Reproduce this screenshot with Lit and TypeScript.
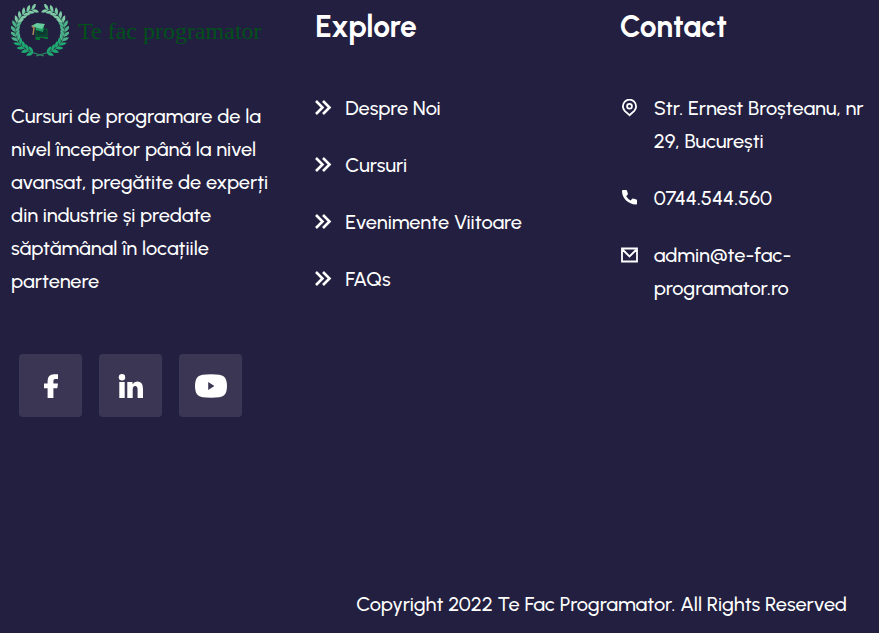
import { LitElement, html, svg, css } from "lit";
import { customElement } from "lit/decorators.js";

const links = ["Despre Noi", "Cursuri", "Evenimente Viitoare", "FAQs"];

const chevrons = html`<svg class="icon" viewBox="0 0 18 18" aria-hidden="true">
  <path d="M1 2 7.500 8.500 1 15M8 2 14.500 8.500 8 15" fill="none" stroke="currentColor" stroke-width="2.6" />
</svg>`;

const pin = html`<svg class="icon" viewBox="0 0 18 18" aria-hidden="true">
  <g fill="none" stroke="currentColor" stroke-width="1.8">
    <path d="M9.500 16.200 4.700 11.800A6.600 6.600 0 1 1 14.300 11.800Z" />
    <circle cx="9.500" cy="7.300" r="2.400" />
  </g>
</svg>`;

const phone = html`<svg class="icon" viewBox="0 0 18 18" aria-hidden="true">
  <path d="M3 1h3.200q.5 0 .7.5l1 3.200q.1.5-.2.9L6.200 7.200a11 11 0 0 0 4.400 4.200l1.600-1.600q.4-.3.9-.2l3.300 1q.6.2.6.8v3.300q0 .7-.8.7C8.600 15.600 2 9.400 2 2q0-1 1-1Z" fill="currentColor" />
</svg>`;

const mail = html`<svg class="icon" viewBox="0 0 18 18" aria-hidden="true">
  <path d="M2 2.500H17V15.500H2ZM3 4 9.500 10.500 16 4" fill="none" stroke="currentColor" stroke-width="1.800" />
</svg>`;

const facebook = html`<svg class="social-icon" viewBox="0 0 32 32" aria-hidden="true">
  <path d="M12.600 28V18.300H9V13.600H12.600V11Q12.600 4.200 19 4.200H23V9H20.200Q18.400 9 18.400 10.800V13.600H23L22.300 18.300H18.400V28Z" fill="currentColor" />
</svg>`;

const linkedin = html`<svg class="social-icon" viewBox="0 0 32 32" aria-hidden="true">
  <g fill="currentColor">
    <circle cx="7" cy="7.200" r="3.200" />
    <path d="M4.300 12H9.700V28H4.300ZM12.300 12H17.500V14.200Q19 11.600 22.300 11.600 28 11.600 28 18.600V28H22.600V19.800Q22.600 16.100 20.200 16.100 17.700 16.100 17.700 19.800V28H12.300Z" />
  </g>
</svg>`;

const youtube = html`<svg class="social-icon" viewBox="0 0 32 32" aria-hidden="true">
  <path fill="currentColor" fill-rule="evenodd" d="M16 4.200Q26 4.200 28.800 6.400 32 9 32 16T28.800 25.600Q26 27.800 16 27.800T3.200 25.600Q0 23 0 16T3.200 6.400Q6 4.200 16 4.200ZM13.200 12V20L19.400 16Z" />
</svg>`;

const leafPairs = Array.from({ length: 13 }, (_, i) => i);

function branch(side: number) {
  return svg`<g transform=${`translate(29 27) scale(${side} 1)`}>
    <path d="M-7-22A23.500 22.500 0 0 0-6 22L4 25" fill="none" stroke="#2f8a62" stroke-width="1.2" />
    ${leafPairs.map((i) => {
      const degrees = 200 + (i * 144) / 12;
      const angle = (degrees * Math.PI) / 180;
      const x = 24.5 * Math.sin(angle);
      const y = 22.5 * Math.cos(angle);
      const fill = i < 5 ? "#7fc9a5" : i < 9 ? "#4db28a" : "#1fa972";
      return svg`<g fill=${fill} transform=${`translate(${x.toFixed(2)} ${y.toFixed(2)}) rotate(${(180 - degrees).toFixed(2)})`}>
        <path d="M0 0Q1-4.500 6-4.800 5.500 0 0 0Z" />
        <path d="M0 0Q1 4.500 6 4.800 5.500 0 0 0Z" />
      </g>`;
    })}
  </g>`;
}

const emblem = html`<svg class="emblem" viewBox="0 0 58 54" aria-hidden="true">
  ${branch(1)}${branch(-1)}
  <path d="M25 25H36V32H25Z" fill="#0b3a35" stroke="#08602f" />
  <path d="M24 33H37V35H33V34H29V36H25Z" fill="#087438" />
  <path d="M24 22 33 22 32 28 25 26Z" fill="#249c62" />
  <path d="M20 22 26 19 34 20 31 25Z" fill="#67cc9b" />
  <path d="M21 22 23 24 22 31" fill="none" stroke="#a78b59" stroke-width="1.500" />
</svg>`;

@customElement("app-root")
export class AppRoot extends LitElement {
  static styles = css`
    :host {
      display: block;
      min-height: 100vh;
      background: #231f40;
      color: #fff;
      font: 500 20px/33px Urbanist, Lato, sans-serif;
    }
    footer {
      display: flex;
      flex-direction: column;
      justify-content: space-between;
      min-height: 100vh;
    }
    .columns {
      display: grid;
      grid-template-columns: repeat(3, minmax(0, 1fr));
      gap: 45px;
      padding-left: 11px;
    }
    a {
      color: inherit;
      text-decoration: none;
    }
    .brand {
      display: flex;
      align-items: center;
      gap: 9px;
      height: 62px;
      color: #00501a;
      font-family: "Liberation Serif", serif;
      font-size: 24px;
      font-weight: 400;
      white-space: nowrap;
    }
    .emblem {
      flex: none;
      width: 58px;
      height: 54px;
    }
    .about {
      margin: 38px 0 0;
    }
    .social {
      display: flex;
      gap: 17px;
      margin: 56px 0 0 8px;
    }
    .social-link {
      display: grid;
      place-items: center;
      width: 63px;
      height: 63px;
      border-radius: 4px;
      background: #3a3653;
    }
    .social-icon {
      width: 32px;
      height: 32px;
    }
    h2 {
      margin: 8px 0 46px;
      font-size: 30px;
      line-height: 38px;
      font-weight: 700;
    }
    ul {
      display: grid;
      gap: 24px;
      margin: 0;
      padding: 0;
      list-style: none;
    }
    .entry {
      display: flex;
      gap: 12px;
    }
    .contact .entry {
      gap: 16px;
    }
    .icon {
      flex: none;
      width: 18px;
      height: 18px;
      margin-top: 7px;
    }
    .copyright {
      margin: 0;
      padding: 0 32px 12px;
      text-align: right;
    }
  `;

  render() {
    return html`<footer>
      <div class="columns">
        <section>
          <a class="brand" href="#">${emblem}<span>Te fac programator</span></a>
          <p class="about">
            Cursuri de programare de la nivel începător până la nivel avansat,
            pregătite de experți din industrie și predate săptămânal în locațiile
            partenere
          </p>
          <div class="social">
            <a class="social-link" href="#" aria-label="Facebook">${facebook}</a>
            <a class="social-link" href="#" aria-label="LinkedIn">${linkedin}</a>
            <a class="social-link" href="#" aria-label="YouTube">${youtube}</a>
          </div>
        </section>
        <nav aria-labelledby="explore">
          <h2 id="explore">Explore</h2>
          <ul>
            ${links.map((label) => html`<li><a class="entry" href="#">${chevrons}<span>${label}</span></a></li>`)}
          </ul>
        </nav>
        <section class="contact">
          <h2>Contact</h2>
          <ul>
            <li class="entry">${pin}<span>Str. Ernest Broșteanu, nr 29, București</span></li>
            <li><a class="entry" href="tel:0744544560">${phone}<span>0744.544.560</span></a></li>
            <li><a class="entry" href="mailto:admin@te-fac-programator.ro">${mail}<span>admin@te-fac-programator.ro</span></a></li>
          </ul>
        </section>
      </div>
      <p class="copyright">Copyright 2022 Te Fac Programator. All Rights Reserved</p>
    </footer>`;
  }
}
